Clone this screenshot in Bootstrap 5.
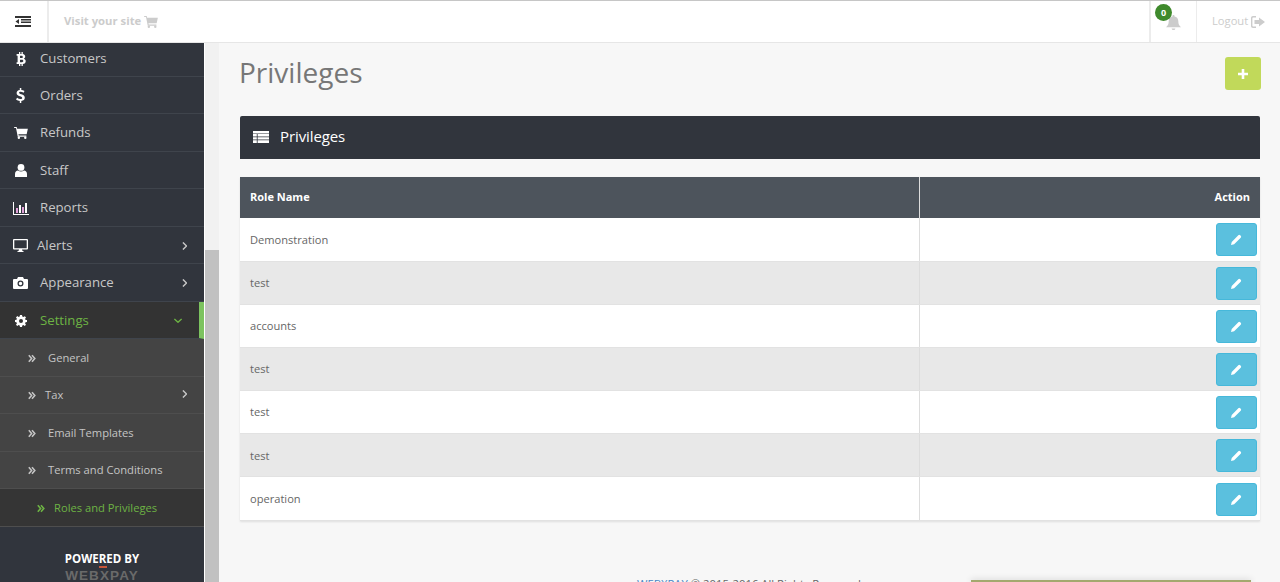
<!DOCTYPE html>
<html lang="en">
<head>
    <meta charset="UTF-8">
    <meta name="viewport" content="width=device-width, initial-scale=1.0">
    <title>Privileges</title>
    <link href="https://cdn.jsdelivr.net/npm/bootstrap@5.3.0/dist/css/bootstrap.min.css" rel="stylesheet">
    <style>
        html, body { height: 582px; overflow: hidden; }
        body { font-family: "Open Sans", sans-serif; background: #f7f7f7; color: #666; }
        svg { display: block; fill: currentColor; }

        .topbar { height: 43px; background: #fff; border-top: 1px solid #c6c6c6; border-bottom: 1px solid #e6e6e6; }
        .top-cell { border-left: 2px solid #ececec; height: 100%; }
        .toggle-cell { width: 49px; border-right: 2px solid #ececec; color: #333; padding-right: 2px; }
        .visit-link { color: #ccc; font-size: 11.3px; font-weight: 700; padding-left: 15px; gap: 3px; }
        .bell-cell { width: 47px; color: #ccc; padding-top: 2px; }
        .logout-cell { width: 84px; border-left-width: 1px; color: #ccc; font-size: 11.2px; padding-left: 15px; gap: 3px; }
        .count-pill { top: 3px; left: 4px; width: 17px; height: 17px; border-radius: 50%; background: #3f8a2c; color: #fff; font-size: 9px; font-weight: 700; line-height: 17px; text-align: center; }

        .page-body { height: 539px; }
        .side-menu { width: 205px; background: #31353d; border-right: 1px solid #fff; }
        .side-row { height: 37.5px; flex: none; padding-top: 2px; border-bottom: 1px solid #3f444c; color: #c8c8c8; font-size: 13.2px; text-decoration: none; }
        .side-row.first-row { height: 33.5px; padding-top: 0; padding-bottom: 1px; }
        .side-ico { width: 40px; padding: 0 12px 0 13px; color: #fff; flex: none; display: flex; justify-content: center; }
        .side-row.tight .side-ico { width: 37px; padding-right: 9px; }
        .side-arrow { margin-left: auto; margin-right: 17px; color: #c8c8c8; }
        .side-row.open { background: #333; color: #6db344; border-right: 5px solid #7cc35f; }
        .side-row.open .side-arrow { color: #6db344; }
        .sub-row { background: #444; border-bottom-color: #4e4e4e; font-size: 11.2px; color: #c4c4c4; }
        .sub-row .side-ico { width: 48px; padding: 0 0 0 28px; color: #c4c4c4; justify-content: flex-start; }
        .side-row.sub-row.tight .side-ico { width: 45px; padding: 0 0 0 28px; }
        .sub-row.tight .side-arrow { margin-bottom: 3px; }
        .sub-row.current { background: #353535; color: #6db344; }
        .sub-row.current .side-ico { width: 54px; padding-left: 37px; color: #6db344; }
        .powered { color: #fff; font-size: 11.5px; font-weight: 700; line-height: 14px; padding-top: 25px; flex: none; }
        .brand-logo { font-family: "Liberation Sans", sans-serif; font-weight: 700; font-size: 13.5px; letter-spacing: 1.1px; color: #6a6a6a; line-height: 15px; margin-top: 2px; position: relative; }
        .brand-logo::before { content: ""; position: absolute; left: 99px; top: -2px; width: 8px; height: 2px; background: #c9573a; }
        .brand-logo::after { content: ""; position: absolute; left: 99px; top: 14px; width: 9px; height: 3px; background: #5aa845; }

        .scroll-track { width: 14px; background: #f1f1f1; }
        .scroll-thumb { height: 332px; margin-top: 207px; background: #c1c1c1; }

        .main-pane { padding: 0 19px 0 21px; }
        .page-title { font-size: 28px; font-weight: 400; color: #777; height: 73px; margin: 0 0 0 -1px; padding-top: 10px; line-height: 38px; }
        .add-btn { width: 36px; height: 33px; margin-top: 14px; background: #c1d95a; color: #fff; border-radius: 3px; border: 0; padding: 0; }
        .panel-head { height: 43px; background: #31353d; color: #fff; font-size: 15px; font-weight: 500; letter-spacing: -.1px; border-radius: 2px 2px 0 0; padding: 0 0 2px 13px; gap: 11px; margin: 0 1px 18px 0; }
        .roles-table { font-size: 11.1px; border-collapse: collapse; width: 1020px; margin: 0; box-shadow: 0 1px 2px rgba(0,0,0,.1); }
        .roles-table th { height: 41px; background: #4d545c; color: #fff; font-size: 11px; font-weight: 700; padding: 0 10px; vertical-align: middle; border: 0; }
        .roles-table td { height: 43.17px; padding: 1px 3px 0 10px; vertical-align: middle; color: #666; background: #fff; border: 0; border-bottom: 1px solid #e2e2e2; }
        .roles-table tr.alt td { background: #e8e8e8; }
        .roles-table th:first-child, .roles-table td:first-child { width: 679px; border-right: 1px solid #ddd; }
        .edit-btn { width: 41px; height: 33px; background: #5bc0de; border: 1px solid #46b8da; border-radius: 3px; color: #fff; padding: 0; }
        .foot-line { font-size: 11.3px; color: #666; padding-left: 397px; margin-top: 55px; line-height: 16px; white-space: nowrap; }
        .foot-line a { color: #4a86c5; text-decoration: none; }
        .toast-strip { left: 971px; bottom: 0; width: 280px; height: 2px; background: #a3a86e; box-shadow: 0 0 6px rgba(0,0,0,.25); }
    </style>
</head>
<body>
    <svg width="0" height="0" style="position:absolute">
        <defs>
            <symbol id="i-cart" viewBox="0 0 16 14"><path d="M0 0h3l.5 2H16l-1.400 6.500H5l.3 1.500h9v1.300H4.200L2.200 1.300H0z"/><circle cx="5.500" cy="12.600" r="1.400"/><circle cx="13" cy="12.600" r="1.400"/></symbol>
            <symbol id="i-angle" viewBox="0 0 6 10"><path d="M1 .5 5.500 5 1 9.500" fill="none" stroke="currentColor" stroke-width="1.700"/></symbol>
            <symbol id="i-down" viewBox="0 0 10 6"><path d="M.5 1 5 5.200 9.500 1" fill="none" stroke="currentColor" stroke-width="1.700"/></symbol>
            <symbol id="i-dbl" viewBox="0 0 10 10"><path d="M1 1 4.500 5 1 9M5 1 8.500 5 5 9" fill="none" stroke="currentColor" stroke-width="2"/></symbol>
            <symbol id="i-pencil" viewBox="0 0 12 12"><path d="M0 12l.8-3.400L8 1.400a1.400 1.400 0 0 1 2 0l.6.6a1.400 1.400 0 0 1 0 2L3.400 11.200z"/></symbol>
            <symbol id="i-bitcoin" viewBox="0 0 10 14"><path fill-rule="evenodd" d="M3 0h1.300v2H5.500V0h1.300v2.100c1.500.3 2.400 1.200 2.400 2.500 0 1-.5 1.700-1.300 2.100 1.100.4 1.800 1.200 1.800 2.500 0 1.700-1.100 2.500-2.900 2.700V14H5.500v-2H4.300v2H3v-2H.6v-1.700h1V3.700h-1V2H3zM4 3.800v2.300h1.700c.8 0 1.100-.5 1.100-1.100S6.500 3.800 5.700 3.800zM4 7.800v2.500h2c.9 0 1.300-.5 1.300-1.200S6.900 7.800 6 7.800z"/></symbol>
            <symbol id="i-dollar" viewBox="0 0 9 15"><path d="M3.800 0h1.500v1.900c1.200.1 2.300.5 3.200 1.100L7.600 4.700c-1-.6-2-.9-3-.9-1 0-1.500.4-1.500 1 0 .7.700 1 2.200 1.500 2.200.7 3.500 1.600 3.500 3.500 0 1.700-1.200 2.900-3.500 3.200V15H3.800v-2C2.400 12.900 1.100 12.400 0 11.500l1.100-1.700c1.100.8 2.300 1.300 3.400 1.300 1.100 0 1.700-.5 1.700-1.200 0-.7-.7-1.100-2.300-1.600C1.800 7.600.6 6.700.6 4.900.6 3.300 1.800 2.200 3.800 1.900z"/></symbol>
            <symbol id="i-user" viewBox="0 0 12 13"><circle cx="6" cy="3.400" r="3.400"/><path d="M0 13v-3c0-2.200 1.400-3.500 3-3.600 1.700 1.300 4.300 1.300 6 0 1.600.1 3 1.400 3 3.600v3z"/></symbol>
            <symbol id="i-chart" viewBox="0 0 16 13"><path d="M0 0h1v12h15v1H0z"/><path fill="#e0a0d8" d="M3 6h2v5H3zM9 5h2v6H9z"/><path d="M6 3h2v8H6zM12 1h2v10h-2z"/></symbol>
            <symbol id="i-desktop" viewBox="0 0 15 13"><path fill-rule="evenodd" d="M1 0h13a1 1 0 0 1 1 1v8.500a1 1 0 0 1-1 1H9l.5 1.500h1v1h-6v-1h1l.5-1.500H1a1 1 0 0 1-1-1V1a1 1 0 0 1 1-1zm.3 1.300v7.900h12.400V1.300z"/></symbol>
            <symbol id="i-camera" viewBox="0 0 15 12"><path fill-rule="evenodd" d="M5 0h5l1 2h3a1 1 0 0 1 1 1v8a1 1 0 0 1-1 1H1a1 1 0 0 1-1-1V3a1 1 0 0 1 1-1h3zM7.500 3.500a3 3 0 1 0 0 6 3 3 0 0 0 0-6zm0 1.300a1.700 1.700 0 1 1 0 3.400 1.700 1.700 0 0 1 0-3.400z"/></symbol>
            <symbol id="i-cog" viewBox="0 0 12 12"><path fill-rule="evenodd" d="M5 0h2l.3 1.600 1.100.5L9.800 1.200l1.200 1.300-.9 1.300.5 1.100 1.400.2v1.900l-1.500.3-.4 1.100.9 1.300-1.300 1.300-1.300-.9-1.100.4L7 12H5l-.3-1.500-1.100-.4-1.300.9L1 9.700l.9-1.300-.5-1.100L0 7V5.100l1.500-.3.4-1.100L1 2.400l1.300-1.300 1.300.9 1.100-.4zM6 4a2 2 0 1 0 0 4 2 2 0 0 0 0-4z"/></symbol>
            <symbol id="i-table" viewBox="0 0 16 12"><path d="M0 0h16v2.400H0zM0 3.100h3.800v2.400H0zM4.600 3.100H16v2.400H4.600zM0 6.200h3.800v2.400H0zM4.600 6.200H16v2.400H4.600zM0 9.300h3.800V12H0zM4.600 9.300H16V12H4.600z"/></symbol>
            <symbol id="i-plus" viewBox="0 0 10 10"><path d="M3.700 0h2.600v3.700H10v2.600H6.300V10H3.700V6.300H0V3.700h3.700z"/></symbol>
            <symbol id="i-bell" viewBox="0 0 15 15"><path d="M7.500 0c.6 0 1 .4 1 1v.6c2.400.4 3.800 2.300 3.800 4.600 0 3 .9 4.500 2.700 6H0c1.800-1.500 2.700-3 2.700-6 0-2.300 1.400-4.200 3.800-4.600V1c0-.6.400-1 1-1zM5.600 13.400h3.800a1.900 1.600 0 0 1-3.800 0z"/></symbol>
            <symbol id="i-signout" viewBox="0 0 14 12"><path d="M5 0v1.500H2.200c-.5 0-.8.300-.8.800v7.400c0 .5.300.8.800.8H5V12H2C.8 12 0 11.200 0 10V2C0 .8.800 0 2 0z"/><path d="M8 1.500 14 6l-6 4.500V8H3.500V4H8z"/></symbol>
            <symbol id="i-outdent" viewBox="0 0 16 11"><path d="M0 0h16v2H0zM6 3h10v1.500H6zM6 5.500h10V7H6zM0 9h16v2H0z"/><path d="M4 3v5L.5 5.500z"/></symbol>
        </defs>
    </svg>

    <header class="topbar d-flex align-items-stretch">
        <div class="toggle-cell d-flex align-items-center justify-content-center">
            <svg width="16" height="11"><use href="#i-outdent"/></svg>
        </div>
        <a class="visit-link d-flex align-items-center text-decoration-none" href="#">Visit your site <svg width="14" height="12"><use href="#i-cart"/></svg></a>
        <div class="ms-auto d-flex">
            <div class="top-cell bell-cell position-relative d-flex align-items-center justify-content-center">
                <span class="count-pill position-absolute">0</span>
                <svg width="15" height="15"><use href="#i-bell"/></svg>
            </div>
            <div class="top-cell logout-cell d-flex align-items-center">Logout <svg width="14" height="12"><use href="#i-signout"/></svg></div>
        </div>
    </header>

    <div class="page-body d-flex">
        <nav class="side-menu d-flex flex-column flex-shrink-0 overflow-hidden">
            <a class="side-row first-row d-flex align-items-center" href="#"><span class="side-ico"><svg width="10" height="14"><use href="#i-bitcoin"/></svg></span>Customers</a>
            <a class="side-row d-flex align-items-center" href="#"><span class="side-ico"><svg width="9" height="15"><use href="#i-dollar"/></svg></span>Orders</a>
            <a class="side-row d-flex align-items-center" href="#"><span class="side-ico"><svg width="14" height="12"><use href="#i-cart"/></svg></span>Refunds</a>
            <a class="side-row d-flex align-items-center" href="#"><span class="side-ico"><svg width="12" height="13"><use href="#i-user"/></svg></span>Staff</a>
            <a class="side-row d-flex align-items-center" href="#"><span class="side-ico"><svg width="16" height="13" class="flex-shrink-0"><use href="#i-chart"/></svg></span>Reports</a>
            <a class="side-row tight d-flex align-items-center" href="#"><span class="side-ico"><svg width="15" height="13"><use href="#i-desktop"/></svg></span>Alerts<svg class="side-arrow" width="5" height="8"><use href="#i-angle"/></svg></a>
            <a class="side-row d-flex align-items-center" href="#"><span class="side-ico"><svg width="15" height="12"><use href="#i-camera"/></svg></span>Appearance<svg class="side-arrow" width="5" height="8"><use href="#i-angle"/></svg></a>
            <a class="side-row open d-flex align-items-center" href="#"><span class="side-ico"><svg width="12" height="12"><use href="#i-cog"/></svg></span>Settings<svg class="side-arrow" width="8" height="5"><use href="#i-down"/></svg></a>
            <a class="side-row sub-row d-flex align-items-center" href="#"><span class="side-ico"><svg width="8" height="9"><use href="#i-dbl"/></svg></span>General</a>
            <a class="side-row sub-row tight d-flex align-items-center" href="#"><span class="side-ico"><svg width="8" height="9"><use href="#i-dbl"/></svg></span>Tax<svg class="side-arrow" width="5" height="8"><use href="#i-angle"/></svg></a>
            <a class="side-row sub-row d-flex align-items-center" href="#"><span class="side-ico"><svg width="8" height="9"><use href="#i-dbl"/></svg></span>Email Templates</a>
            <a class="side-row sub-row d-flex align-items-center" href="#"><span class="side-ico"><svg width="8" height="9"><use href="#i-dbl"/></svg></span>Terms and Conditions</a>
            <a class="side-row sub-row current d-flex align-items-center" href="#"><span class="side-ico"><svg width="8" height="9"><use href="#i-dbl"/></svg></span>Roles and Privileges</a>
            <div class="powered text-center">POWERED BY
                <div class="brand-logo">WEBXPAY</div>
            </div>
        </nav>

        <div class="scroll-track flex-shrink-0"><div class="scroll-thumb"></div></div>

        <main class="main-pane flex-grow-1 position-relative">
            <div class="d-flex justify-content-between align-items-start">
                <h1 class="page-title">Privileges</h1>
                <button class="add-btn btn d-flex align-items-center justify-content-center" type="button"><svg width="10" height="10"><use href="#i-plus"/></svg></button>
            </div>
            <div class="panel-head d-flex align-items-center"><svg width="16" height="12"><use href="#i-table"/></svg>Privileges</div>
            <table class="table roles-table">
                <thead><tr><th>Role Name</th><th class="text-end">Action</th></tr></thead>
                <tbody>
                    <tr><td>Demonstration</td><td class="text-end"><button class="edit-btn btn" type="button"><svg class="mx-auto" width="11" height="11"><use href="#i-pencil"/></svg></button></td></tr>
                    <tr class="alt"><td>test</td><td class="text-end"><button class="edit-btn btn" type="button"><svg class="mx-auto" width="11" height="11"><use href="#i-pencil"/></svg></button></td></tr>
                    <tr><td>accounts</td><td class="text-end"><button class="edit-btn btn" type="button"><svg class="mx-auto" width="11" height="11"><use href="#i-pencil"/></svg></button></td></tr>
                    <tr class="alt"><td>test</td><td class="text-end"><button class="edit-btn btn" type="button"><svg class="mx-auto" width="11" height="11"><use href="#i-pencil"/></svg></button></td></tr>
                    <tr><td>test</td><td class="text-end"><button class="edit-btn btn" type="button"><svg class="mx-auto" width="11" height="11"><use href="#i-pencil"/></svg></button></td></tr>
                    <tr class="alt"><td>test</td><td class="text-end"><button class="edit-btn btn" type="button"><svg class="mx-auto" width="11" height="11"><use href="#i-pencil"/></svg></button></td></tr>
                    <tr><td>operation</td><td class="text-end"><button class="edit-btn btn" type="button"><svg class="mx-auto" width="11" height="11"><use href="#i-pencil"/></svg></button></td></tr>
                </tbody>
            </table>
            <p class="foot-line"><a href="#">WEBXPAY</a> © 2015-2016 All Rights Reserved</p>
        </main>
    </div>
    <div class="toast-strip position-fixed"></div>

    <script src="https://cdn.jsdelivr.net/npm/bootstrap@5.3.0/dist/js/bootstrap.bundle.min.js"></script>
</body>
</html>
